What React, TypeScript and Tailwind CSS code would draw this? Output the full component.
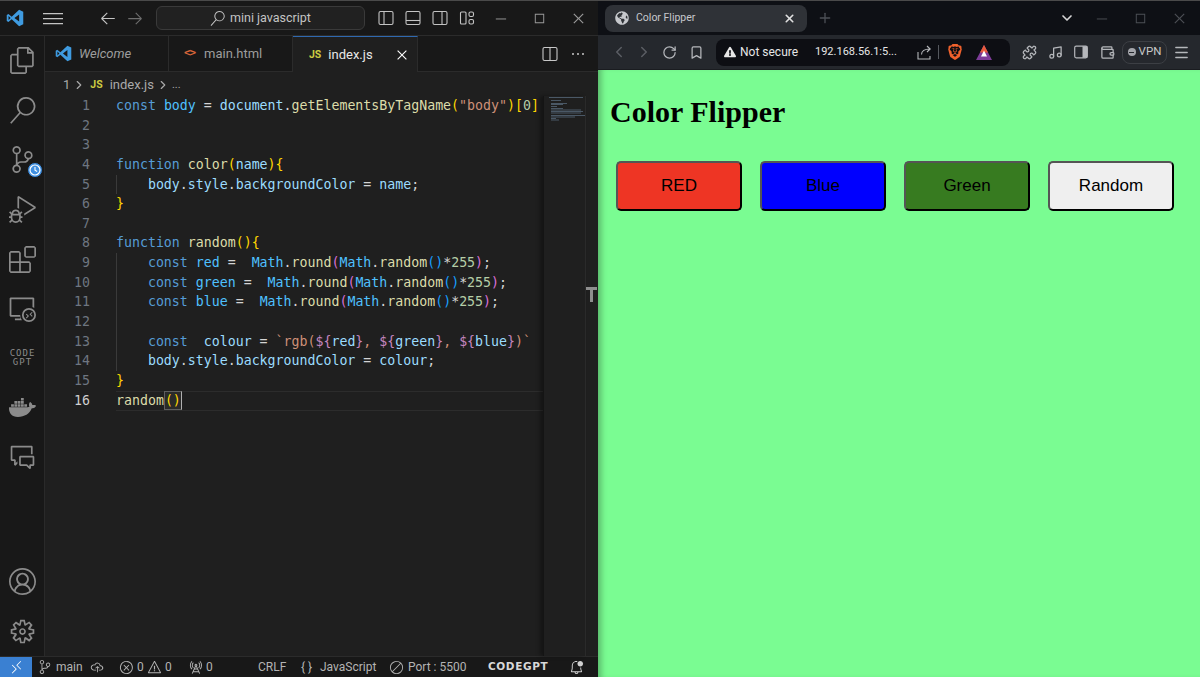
import { Bookmark, ChevronDown, ChevronLeft, ChevronRight, Menu, Music, Plus, Puzzle, RotateCw, Wallet, X } from "lucide-react";
import { FaDocker, FaExclamationTriangle, FaGlobeAmericas } from "react-icons/fa";
import { SiBrave } from "react-icons/si";
import {
  VscAccount,
  VscArrowLeft,
  VscArrowRight,
  VscBellDot,
  VscChromeClose,
  VscChromeMaximize,
  VscChromeMinimize,
  VscCircleSlash,
  VscCloudUpload,
  VscCommentDiscussion,
  VscDebugAlt,
  VscEllipsis,
  VscError,
  VscExtensions,
  VscFiles,
  VscGear,
  VscMenu,
  VscRadioTower,
  VscRemote,
  VscRemoteExplorer,
  VscSearch,
  VscSourceControl,
  VscWarning,
} from "react-icons/vsc";

const COLORS = {
  p: "text-[#d4d4d4]",
  k: "text-[#569cd6]",
  c: "text-[#4fc1ff]",
  v: "text-[#9cdcfe]",
  f: "text-[#dcdcaa]",
  g: "text-[#ffd700]",
  m: "text-[#da70d6]",
  b: "text-[#179fff]",
  s: "text-[#ce9178]",
  n: "text-[#b5cea8]",
  t: "text-[#c586c0]",
};

type Tok = [string, keyof typeof COLORS];

function mathLine(name: string): Tok[] {
  return [
    ["    const ", "k"],
    [name, "c"],
    [" =  ", "p"],
    ["Math", "c"],
    [".", "p"],
    ["round", "f"],
    ["(", "m"],
    ["Math", "c"],
    [".", "p"],
    ["random", "f"],
    ["()", "b"],
    ["*", "p"],
    ["255", "n"],
    [")", "m"],
    [";", "p"],
  ];
}

const LINES: Tok[][] = [
  [
    ["const ", "k"],
    ["body", "c"],
    [" = ", "p"],
    ["document", "v"],
    [".", "p"],
    ["getElementsByTagName", "f"],
    ["(", "g"],
    ['"body"', "s"],
    [")[", "g"],
    ["0", "n"],
    ["]", "g"],
  ],
  [],
  [],
  [
    ["function ", "k"],
    ["color", "f"],
    ["(", "g"],
    ["name", "v"],
    ["){", "g"],
  ],
  [
    ["    body", "v"],
    [".", "p"],
    ["style", "v"],
    [".", "p"],
    ["backgroundColor", "v"],
    [" = ", "p"],
    ["name", "v"],
    [";", "p"],
  ],
  [["}", "g"]],
  [],
  [
    ["function ", "k"],
    ["random", "f"],
    ["(){", "g"],
  ],
  mathLine("red"),
  mathLine("green"),
  mathLine("blue"),
  [],
  [
    ["    const  ", "k"],
    ["colour", "v"],
    [" = ", "p"],
    ["`rgb(", "s"],
    ["${", "t"],
    ["red", "v"],
    ["}", "t"],
    [", ", "s"],
    ["${", "t"],
    ["green", "v"],
    ["}", "t"],
    [", ", "s"],
    ["${", "t"],
    ["blue", "v"],
    ["}", "t"],
    [")`", "s"],
  ],
  [
    ["    body", "v"],
    [".", "p"],
    ["style", "v"],
    [".", "p"],
    ["backgroundColor", "v"],
    [" = ", "p"],
    ["colour", "v"],
    [";", "p"],
  ],
  [["}", "g"]],
  [["random", "f"]],
];

function VsLogo({ size }: { size: number }) {
  return (
    <svg width={size} height={size} viewBox="0 0 24 24">
      <path fill="#3f9be0" d="M17.5 1 23 3.6v16.8L17.5 23 7.6 13.8l-4.4 3.4L1 16V8l2.2-1.2 4.4 3.4z" />
      <path fill="#181818" d="M17.5 7.2 11.2 12l6.3 4.8zM3.4 9.2v5.6L6.2 12z" />
    </svg>
  );
}

// outlined pane icon: a rounded frame with one divider
function PaneIcon({ d }: { d: string }) {
  return (
    <svg width="16" height="16" viewBox="0 0 16 16" fill="none" stroke="currentColor" strokeWidth="1.1">
      <rect x="1" y="1.5" width="14" height="13" rx="1.5" />
      <path d={d} />
    </svg>
  );
}

function ActivityItem({ children }: { children: React.ReactNode }) {
  return <div className="flex h-[49.6px] items-center justify-center text-[#8b8b8b]">{children}</div>;
}

function ActivityBar() {
  return (
    <aside className="flex w-[45px] shrink-0 flex-col border-r border-[#2a2a2a] bg-[#181818]">
      <ActivityItem>
        <VscFiles size={27} />
      </ActivityItem>
      <ActivityItem>
        <VscSearch size={27} />
      </ActivityItem>
      <ActivityItem>
        <div className="relative">
          <VscSourceControl size={27} />
          <svg className="absolute -right-[7px] -bottom-[5px]" width="16" height="16" viewBox="0 0 16 16">
            <circle cx="8" cy="8" r="7.5" fill="#3f8fe0" stroke="#181818" />
            <circle cx="8" cy="8" r="5" fill="none" stroke="#fff" strokeWidth="1.2" />
            <path d="M8 5v3.2l2.2 1.2" fill="none" stroke="#fff" strokeWidth="1.1" />
          </svg>
        </div>
      </ActivityItem>
      <ActivityItem>
        <VscDebugAlt size={27} />
      </ActivityItem>
      <ActivityItem>
        <VscExtensions size={27} />
      </ActivityItem>
      <ActivityItem>
        <VscRemoteExplorer size={27} />
      </ActivityItem>
      <ActivityItem>
        <div className="pl-[1px] text-center font-['DejaVu_Sans_Mono'] text-[9px] leading-[9px] tracking-[1px]">
          CODE
          <br />
          GPT
        </div>
      </ActivityItem>
      <ActivityItem>
        <FaDocker size={27} />
      </ActivityItem>
      <ActivityItem>
        <VscCommentDiscussion size={27} />
      </ActivityItem>
      <div className="flex-1" />
      <ActivityItem>
        <VscAccount size={27} />
      </ActivityItem>
      <ActivityItem>
        <VscGear size={27} />
      </ActivityItem>
    </aside>
  );
}

function TitleBar() {
  return (
    <header className="flex h-[35px] shrink-0 items-center border-b border-[#2b2b2b] bg-[#181818] text-[#c4c4c4]">
      <div className="ml-[6px]">
        <VsLogo size={18} />
      </div>
      <VscMenu size={20} className="ml-[19px]" />
      <VscArrowLeft size={18} className="ml-[36px]" />
      <VscArrowRight size={18} className="ml-[9px] text-[#6e6e6e]" />
      <div className="ml-[12px] flex h-[24px] w-[209px] items-center justify-center gap-[5px] rounded-[6px] border border-[#3a3a3a] bg-[#212121] text-[12.5px]">
        <VscSearch size={15} />
        mini javascript
      </div>
      <div className="ml-[13px] flex items-center gap-[11px]">
        <PaneIcon d="M6 1.5v13" />
        <PaneIcon d="M1 10.5h14" />
        <PaneIcon d="M10 1.5v13" />
        <svg width="16" height="16" viewBox="0 0 16 16" fill="none" stroke="currentColor" strokeWidth="1.1">
          <rect x="1.5" y="2" width="5.5" height="12" rx="1" />
          <rect x="10" y="2" width="4.5" height="4.5" rx="1.5" />
          <rect x="10" y="9.5" width="4.5" height="4.5" rx="1.5" />
        </svg>
      </div>
      <div className="ml-[18px] flex items-center gap-[24px] text-[#9a9a9a]">
        <VscChromeMinimize size={15} />
        <VscChromeMaximize size={15} />
        <VscChromeClose size={15} />
      </div>
    </header>
  );
}

function Tab({ icon, label, active, italic }: { icon: React.ReactNode; label: string; active?: boolean; italic?: boolean }) {
  return (
    <div
      className={
        active
          ? "flex h-full w-[125px] items-center border-t border-r border-t-[#2f69b0] border-r-[#2b2b2b] bg-[#1f1f1f] pl-[12px] text-[#e8e8e8]"
          : "flex h-full w-[124px] items-center justify-start border-r border-b border-[#2b2b2b] bg-[#181818] pl-[10px] text-[#9d9d9d]"
      }
    >
      {icon}
      <span className={italic ? "ml-[7px] italic" : "ml-[7px]"}>{label}</span>
      {active && <VscChromeClose size={14} className="mr-[8px] ml-auto text-white" />}
    </div>
  );
}

function TabBar() {
  return (
    <div className="flex h-[36px] shrink-0 items-center bg-[#181818] text-[13px]">
      <Tab icon={<VsLogo size={17} />} label="Welcome" italic />
      <Tab
        icon={<span className="ml-[5px] w-[13px] font-['DejaVu_Sans_Mono'] text-[11px] font-bold tracking-[-1px] text-[#d9663a]">{"<>"}</span>}
        label="main.html"
      />
      <Tab icon={<span className="ml-[4px] text-[10.5px] font-bold text-[#cbcb41]">JS</span>} label="index.js" active />
      <div className="flex h-full flex-1 items-center justify-end gap-[12px] border-b border-[#2b2b2b] pr-[12px] text-[#c8c8c8]">
        <PaneIcon d="M8 1.5v13" />
        <VscEllipsis size={16} />
      </div>
    </div>
  );
}

function Breadcrumb() {
  return (
    <div className="flex h-[24px] shrink-0 items-center pt-[2px] pl-[18px] text-[13px] text-[#a9a9a9]">
      1
      <ChevronRight size={14} className="mx-[2px]" />
      <span className="ml-[2px] text-[10.5px] font-bold text-[#cbcb41]">JS</span>
      <span className="ml-[7px]">index.js</span>
      <ChevronRight size={14} className="mx-[2px]" />
      <span className="text-[11px]">...</span>
    </div>
  );
}

function CodeLine({ tokens, num }: { tokens: Tok[]; num: number }) {
  const current = num === 16;
  const guided = num === 5 || (num >= 9 && num <= 14);
  return (
    <div className="flex h-[19.67px] items-center">
      <div className={current ? "w-[45px] shrink-0 text-right text-[#d0d0d0]" : "w-[45px] shrink-0 text-right text-[#6e7681]"}>{num}</div>
      <div
        className={
          current
            ? "ml-[26px] flex h-full flex-1 items-center border-y border-[#2c2c2c]"
            : guided
              ? "ml-[26px] flex h-full flex-1 items-center shadow-[inset_1px_0_0_#3a3a3a]"
              : "ml-[26px] flex h-full flex-1 items-center"
        }
      >
        {tokens.map((t, i) => (
          <span key={i} className={COLORS[t[1]]}>
            {t[0]}
          </span>
        ))}
        {current && (
          <span className="h-[19px] border border-[#5f5f5f] border-r-[#b0b0b0] bg-[#2a2a2a] leading-[17px] text-[#ffd700]">
            ()
          </span>
        )}
      </div>
    </div>
  );
}

function Minimap() {
  const rows = [
    [0, 34], [6, 10], [12, 16], [14, 12], [18, 6], [22, 12], [25, 30], [28, 32], [31, 30], [36, 34], [39, 24], [42, 5], [45, 8],
  ];
  return (
    <div className="w-[42px] shrink-0 border-l border-[#141414] bg-[#1f1f1f] pl-[5px] shadow-[-3px_0_4px_rgba(0,0,0,0.35)]">
      <svg width="36" height="50" viewBox="0 0 36 50">
        {rows.map(([y, w], i) => (
          <rect key={i} x={i === 0 ? 0 : 2} y={y / 2 + 1} width={w} height="1" fill="#4a5866" />
        ))}
      </svg>
    </div>
  );
}

function Editor() {
  return (
    <div className="flex min-h-0 flex-1 flex-col bg-[#1f1f1f]">
      <TabBar />
      <Breadcrumb />
      <div className="relative flex min-h-0 flex-1">
        <div className="min-w-0 flex-1 font-['DejaVu_Sans_Mono'] text-[13.25px] whitespace-pre">
          {LINES.map((tokens, i) => (
            <CodeLine key={i} tokens={tokens} num={i + 1} />
          ))}
        </div>
        <Minimap />
        <div className="w-[13px] shrink-0 border-l border-[#2a2a2a]" />
        <svg className="absolute top-[190px] right-[0px]" width="13" height="17" viewBox="0 0 13 17">
          <path fill="#8e8e8e" d="M1 1h11v3H8v12H5V4H1z" />
        </svg>
      </div>
    </div>
  );
}

function StatusBar() {
  return (
    <footer className="flex h-[21px] shrink-0 items-center border-t border-[#2b2b2b] bg-[#181818] text-[12px] whitespace-nowrap text-[#b4b4b4]">
      <div className="flex h-full w-[32px] items-center justify-center bg-[#3a80d2] text-white">
        <VscRemote size={15} />
      </div>
      <VscSourceControl size={14} className="ml-[6px]" />
      <span className="ml-[4px] w-[27px]">main</span>
      <VscCloudUpload size={14} className="ml-[7px]" />
      <VscError size={15} className="ml-[15px]" />
      <span className="ml-[3px] w-[7px]">0</span>
      <VscWarning size={15} className="ml-[3px]" />
      <span className="ml-[3px] w-[7px]">0</span>
      <VscRadioTower size={15} className="ml-[16px]" />
      <span className="ml-[3px] w-[7px]">0</span>
      <span className="ml-[45px] w-[28px]">CRLF</span>
      <span className="ml-[15px] w-[14px]">{"{ }"}</span>
      <span className="ml-[5px] w-[56px]">JavaScript</span>
      <VscCircleSlash size={15} className="ml-[13px]" />
      <span className="ml-[4px] w-[59px]">Port : 5500</span>
      <span className="ml-[21px] font-['DejaVu_Sans'] text-[10.5px] font-bold tracking-[0.6px] text-[#d8d8d8]">CODEGPT</span>
      <VscBellDot size={15} className="mr-[14px] ml-auto text-[#d0d0d0]" />
    </footer>
  );
}

function CodeWindow() {
  return (
    <div className="flex w-[598px] shrink-0 flex-col font-['Roboto',sans-serif]">
      <TitleBar />
      <div className="flex min-h-0 flex-1">
        <ActivityBar />
        <Editor />
      </div>
      <StatusBar />
    </div>
  );
}

function BrowserTabs() {
  return (
    <div className="flex h-[34px] shrink-0 items-center bg-[#0e1015] pl-[7px] text-[#9ea0a5]">
      <div className="flex h-[27px] w-[202px] items-center rounded-[8px] bg-[#2f3237] px-[10px] text-[10.5px] text-[#c6c8cc]">
        <FaGlobeAmericas size={14} />
        <span className="ml-[7px]">Color Flipper</span>
        <X size={13} strokeWidth={3} className="mr-[1px] ml-auto text-[#e0e0e0]" />
      </div>
      <Plus size={16} className="ml-[10px] text-[#4c4f55]" />
      <ChevronDown size={16} className="ml-[226px] text-[#d6d6d6]" strokeWidth={2.5} />
      <div className="ml-[19px] flex items-center gap-[24px] text-[#4c4f55]">
        <VscChromeMinimize size={15} />
        <VscChromeMaximize size={15} />
        <VscChromeClose size={15} />
      </div>
    </div>
  );
}

function BrowserToolbar() {
  return (
    <div className="flex h-[35px] shrink-0 items-center border-b border-[#1a1c20] bg-[#25282d] whitespace-nowrap text-[#b5b7bb]">
      <ChevronLeft size={18} className="ml-[12px] text-[#5b5e64]" />
      <ChevronRight size={18} className="ml-[7px] text-[#5b5e64]" />
      <RotateCw size={15} className="ml-[9px]" />
      <Bookmark size={15} className="ml-[12px]" />
      <div className="ml-[12px] flex h-[27px] w-[294px] items-center rounded-[8px] bg-[#0d0e13] pl-[8px] text-[12px] text-[#e6e6e6]">
        <FaExclamationTriangle size={12} />
        <span className="ml-[4px] w-[60px]">Not secure</span>
        <span className="ml-[15px] text-[11px]">192.168.56.1:5...</span>
        <svg className="ml-auto" width="15" height="15" viewBox="0 0 15 15" fill="none" stroke="#b5b7bb" strokeWidth="1.1">
          <path d="M1 7v7h12v-3M4.5 9.5c0-3.5 3-5.5 8.5-5.5M10 1l3.2 3-3.2 3" />
        </svg>
        <div className="mx-[6px] h-[14px] w-px bg-[#55585e]" />
        <SiBrave size={16} className="ml-[2px] text-[#f0612c]" />
        <svg className="mr-[18px] ml-[13px]" width="16" height="15" viewBox="0 0 16 15">
          <path fill="#7d3c98" d="M8 0l8 15H0z" />
          <path fill="#e85a3a" d="M8 0l4 7.5H4z" />
          <path fill="#fff" d="M8 5.5l3 6H5z" />
        </svg>
      </div>
      <Puzzle size={15} className="ml-[12px]" />
      <Music size={15} className="ml-[11px]" />
      <svg className="ml-[11px]" width="14" height="14" viewBox="0 0 14 14">
        <rect x="0.7" y="1.2" width="12.6" height="11.6" rx="1.5" fill="none" stroke="currentColor" strokeWidth="1.2" />
        <rect x="8.5" y="1.2" width="4.8" height="11.6" fill="currentColor" />
      </svg>
      <Wallet size={15} className="ml-[12px]" />
      <div className="ml-[7px] flex h-[23px] w-[45px] items-center justify-center gap-[3px] rounded-[8px] border border-[#3c3f44] text-[11.5px] text-[#c8c8c8]">
        <span className="flex h-[8px] w-[8px] items-center justify-center rounded-full bg-[#a4a6ab]">
          <span className="h-px w-[5px] bg-[#25282d]" />
        </span>
        VPN
      </div>
      <Menu size={17} className="ml-[6px]" />
    </div>
  );
}

const BUTTONS = [
  { label: "RED", className: "bg-[#ee3524]" },
  { label: "Blue", className: "bg-[#0000ff]" },
  { label: "Green", className: "bg-[#377b20]" },
  { label: "Random", className: "bg-[#efefef]" },
];

function BrowserWindow() {
  return (
    <div className="flex min-w-0 flex-1 flex-col font-['Roboto',sans-serif]">
      <BrowserTabs />
      <BrowserToolbar />
      <main className="flex-1 bg-[#7afc92] pt-[23px] pl-[12px] shadow-[inset_7px_0_6px_-4px_rgba(0,0,0,0.28)]">
        <h1 className="font-['Liberation_Serif',serif] text-[30px] leading-[37px] font-bold text-black">Color Flipper</h1>
        <div className="mt-[31px] ml-[6px] flex gap-[18px]">
          {BUTTONS.map((b) => (
            <button
              key={b.label}
              className={`h-[50px] w-[126px] rounded-[5px] border-2 border-t-[#555] border-r-black border-b-black border-l-[#555] font-['Liberation_Sans',sans-serif] text-[17px] text-black ${b.className}`}
            >
              {b.label}
            </button>
          ))}
        </div>
      </main>
    </div>
  );
}

export default function App() {
  return (
    <div className="flex h-[677px] w-[1200px] overflow-hidden border-t border-[#4a4a4a] bg-[#7afc92]">
      <CodeWindow />
      <BrowserWindow />
    </div>
  );
}
